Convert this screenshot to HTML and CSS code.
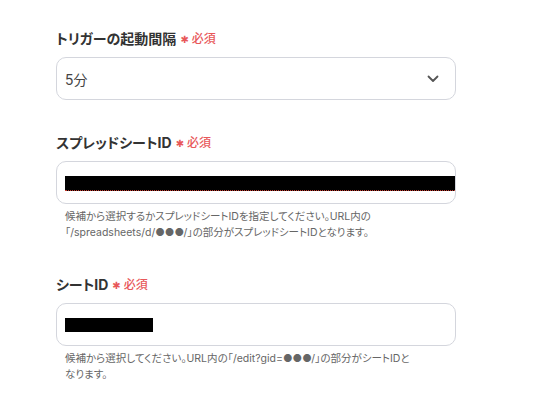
FILE: index.html
```html
<!DOCTYPE html>
<html lang="ja">
<head>
<meta charset="utf-8">
<link rel="stylesheet" href="styles.css">
</head>
<body>
<div class="form">
  <div class="field">
    <div class="label">トリガーの起動間隔<span class="req"><span class="star">✱</span>必須</span></div>
    <div class="box select">
      <span class="value">5分</span>
      <svg class="chev" width="12" height="8" viewBox="0 0 12 8"><path d="M1.5 1.5 L6 6 L10.5 1.5" fill="none" stroke="#555" stroke-width="1.8" stroke-linecap="round" stroke-linejoin="round"/></svg>
    </div>
  </div>
  <div class="field">
    <div class="label">スプレッドシートID<span class="req"><span class="star">✱</span>必須</span></div>
    <div class="box input">
      <div class="redact long"></div>
    </div>
    <p class="help">候補から選択するかスプレッドシートIDを指定してください。URL内の「/spreadsheets/d/●●●/」の部分がスプレッドシートIDとなります。</p>
  </div>
  <div class="field">
    <div class="label">シートID<span class="req"><span class="star">✱</span>必須</span></div>
    <div class="box input">
      <div class="redact short"></div>
    </div>
    <p class="help">候補から選択してください。URL内の「/edit?gid=●●●/」の部分がシートIDとなります。</p>
  </div>
</div>
</body>
</html>
```
FILE: styles.css
```css
html, body {
  margin: 0;
  padding: 0;
  background: #ffffff;
}
body {
  font-family: Inter, "Noto Sans CJK JP", sans-serif;
  color: #333333;
  font-feature-settings: "palt";
}
.form {
  width: 400px;
  padding: 29px 0 0 56px;
  display: flex;
  flex-direction: column;
  gap: 33px;
}
.field {
  display: flex;
  flex-direction: column;
}
.label {
  font-size: 14px;
  font-weight: 700;
  line-height: 20px;
  height: 20px;
  color: #333333;
  display: flex;
  align-items: center;
  margin-bottom: 8px;
}
.req {
  color: #e8585a;
  font-size: 12px;
  font-weight: 500;
  margin-left: 4px;
  display: flex;
  align-items: center;
}
.star {
  font-family: "DejaVu Sans", sans-serif;
  font-size: 10px;
  margin-right: 3px;
  margin-top: 2px;
}
.box {
  box-sizing: border-box;
  height: 43px;
  border: 1px solid #d4d6dd;
  border-radius: 10px;
  background: #ffffff;
  display: flex;
  align-items: center;
  padding: 0 0 0 8px;
  overflow: hidden;
}
.select {
  justify-content: space-between;
  padding-right: 16px;
}
.value {
  font-size: 14px;
  color: #444444;
}
.chev {
  display: block;
}
.redact {
  height: 14px;
  background: #000000;
  border-bottom: 1px dotted #c0392b;
  margin-top: 1px;
}
.redact.long {
  flex: 1;
}
.redact.short {
  width: 88px;
  border-bottom: none;
}
.help {
  margin: 5px 0 1px 9px;
  width: 345px;
  font-size: 10.5px;
  line-height: 16px;
  color: #666666;
}
```
